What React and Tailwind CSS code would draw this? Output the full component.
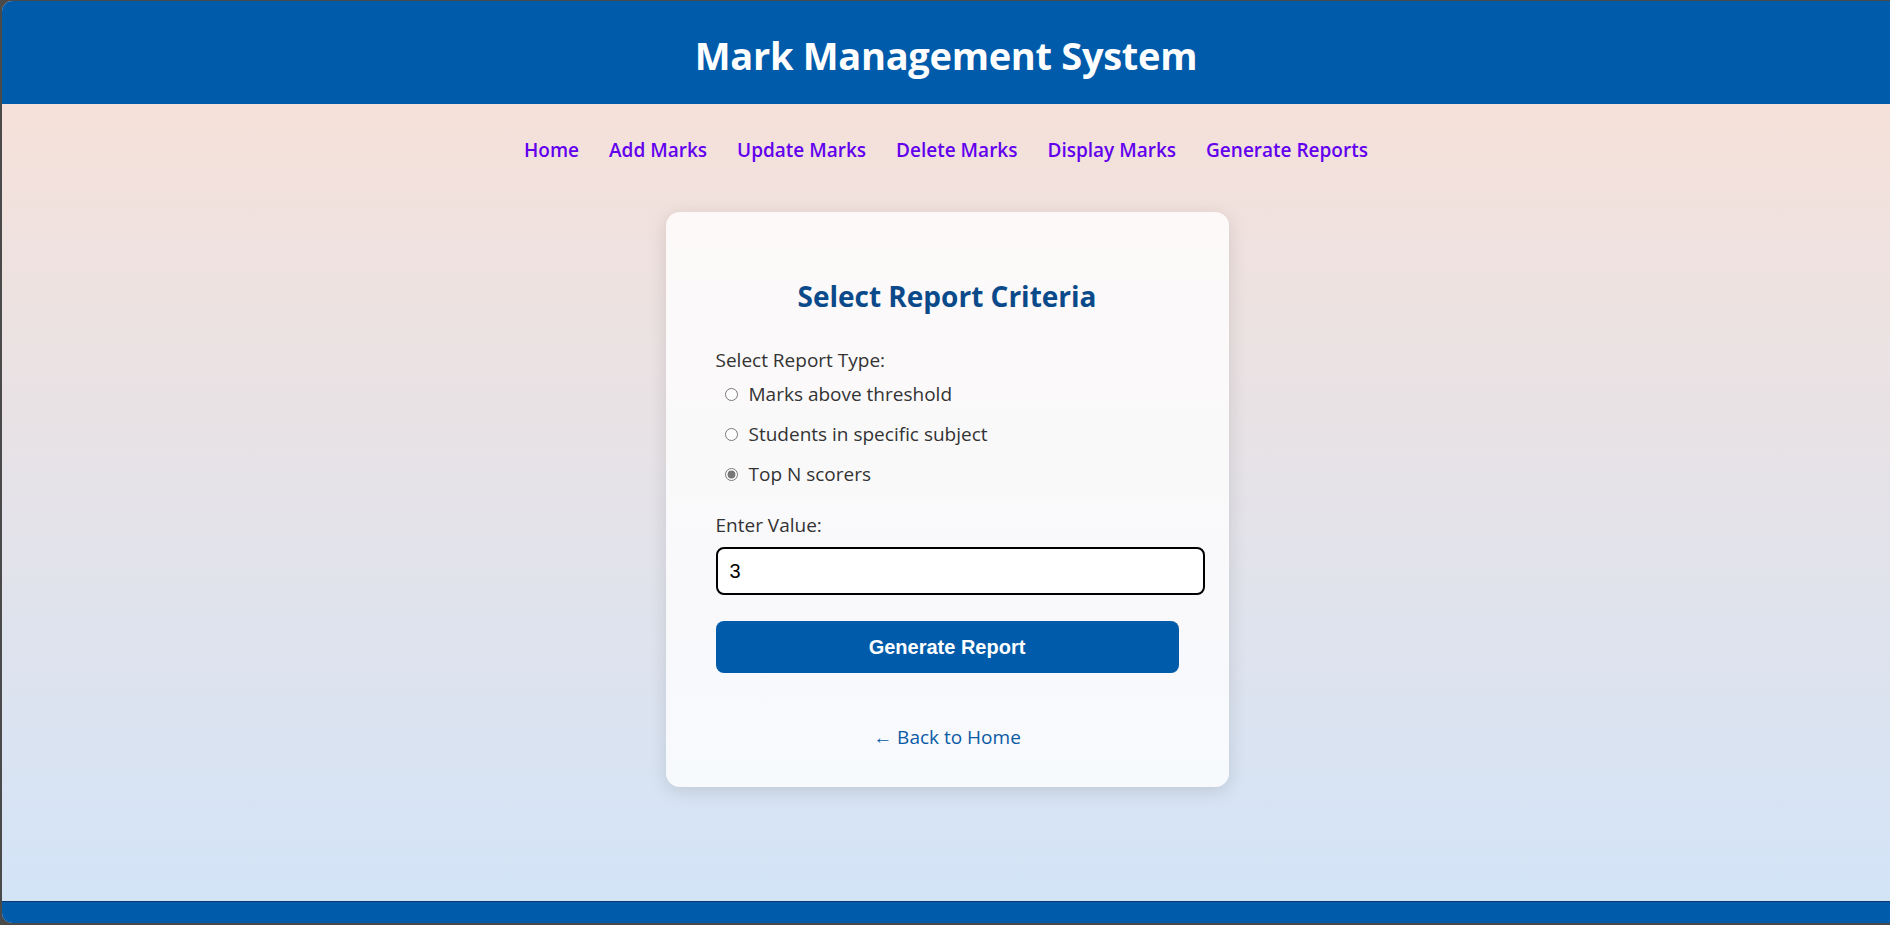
import { useState } from "react";

const links = ["Home", "Add Marks", "Update Marks", "Delete Marks", "Display Marks", "Generate Reports"];

const options = [
  { id: "above", label: "Marks above threshold" },
  { id: "subject", label: "Students in specific subject" },
  { id: "top", label: "Top N scorers" },
];

export default function App() {
  const [type, setType] = useState("top");
  const [value, setValue] = useState("3");

  return (
    <div className="h-screen bg-[#4a4a4a] pt-px pb-[2px] pl-[2px] font-['Open_Sans',sans-serif]">
      <div className="flex h-full flex-col overflow-hidden rounded-l-[10px] bg-gradient-to-b from-[#f9e0d5] to-[#d2e4f8]">
        {/* Header */}
        <header className="flex h-[103px] shrink-0 items-center justify-center bg-[#005baa] pt-[6px]">
          <h1 className="text-[38px] font-bold tracking-[-0.3px] text-white">Mark Management System</h1>
        </header>

        {/* Nav */}
        <nav className="mt-[31px] flex justify-center gap-[30px]">
          {links.map((l) => (
            <a key={l} href="#" className="text-[19px] font-semibold leading-[30px] text-[#6200ee]">
              {l}
            </a>
          ))}
        </nav>

        <main className="flex flex-1 justify-center pt-[47px] pl-[2px]">
          {/* Card */}
          <div className="flex h-[575px] w-[563px] flex-col rounded-[14px] bg-white/80 px-[50px] pt-[64px] shadow-[0_4px_18px_rgba(0,0,0,0.12)]">
            <h2 className="text-center text-[28px] font-bold leading-[40px] text-[#0a4a8a]">Select Report Criteria</h2>

            <p className="mt-[31px] text-[19px] leading-[26px] text-[#333]">Select Report Type:</p>
            <div className="mt-[1px] flex flex-col">
              {options.map((o) => (
                <label key={o.id} className="flex h-[40px] items-center pl-[9px] text-[19px] font-medium text-[#333]">
                  <input
                    type="radio"
                    name="type"
                    checked={type === o.id}
                    onChange={() => setType(o.id)}
                    className="mr-[11px] h-[13px] w-[13px] accent-[#777]"
                  />
                  {o.label}
                </label>
              ))}
            </div>

            <p className="mt-[18px] text-[19px] leading-[26px] text-[#333]">Enter Value:</p>
            <input
              type="text"
              value={value}
              onChange={(e) => setValue(e.target.value)}
              className="mt-[9px] h-[48px] w-[489px] rounded-[8px] border-2 border-black bg-white px-[12px] font-['Liberation_Sans',sans-serif] text-[20px] text-black outline-none"
            />

            <button className="mt-[26px] h-[52px] w-[463px] rounded-[8px] bg-[#005baa] font-['Liberation_Sans',sans-serif] text-[20px] font-bold text-white">
              Generate Report
            </button>

            <a href="#" className="mt-[51px] text-center text-[19px] leading-[26px] text-[#0a5aa6]">
              ← Back to Home
            </a>
          </div>
        </main>

        {/* Footer */}
        <footer className="h-[22px] shrink-0 border-t border-[#0b3a6e] bg-[#005baa]" />
      </div>
    </div>
  );
}
